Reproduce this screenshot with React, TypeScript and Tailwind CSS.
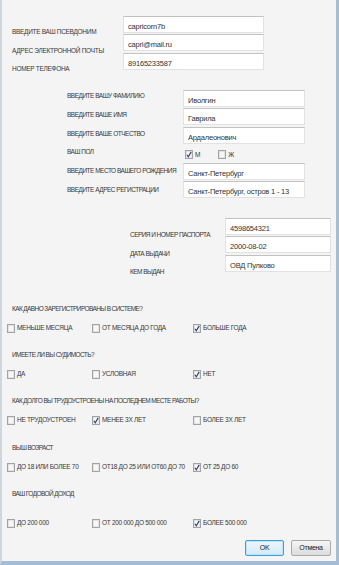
const font = "font-['Liberation_Sans',Arial,sans-serif]"

function Field({ value }: { value: string }) {
  return (
    <div className="h-[17px] mb-[1.3px] bg-white border border-[#e2e2e2] border-t-[#c2c2c2] pl-[4px] pt-[5px] text-[7.5px] leading-[9px] tracking-[-0.2px] text-[#333] whitespace-nowrap">
      {value}
    </div>
  )
}

function Check({ on }: { on?: boolean }) {
  return (
    <svg width="8" height="9" viewBox="0 0 8 9" className="shrink-0">
      <rect x="0.5" y="0.5" width="7" height="8" fill="#ececec" stroke="#a3a3a3" />
      <rect x="1.5" y="1.5" width="5" height="6" fill="#f7f7f7" stroke="#d6d6d6" strokeWidth="0.5" />
      {on && <path d="M1.9 4.7 L3.3 6.7 L6.2 1.9" fill="none" stroke="#233a73" strokeWidth="1.1" />}
    </svg>
  )
}

function Option({ label, on }: { label: string; on?: boolean }) {
  return (
    <div className="flex items-center gap-[2px] whitespace-nowrap">
      <Check on={on} />
      <span>{label}</span>
    </div>
  )
}

function Question({ title, opts, checked, className }: { title: string; opts: string[]; checked: number; className: string }) {
  return (
    <div className={className}>
      <div className="pl-[10px] h-[10px] leading-[10px] tracking-[-0.6px] whitespace-nowrap">{title}</div>
      <div className="grid grid-cols-[85px_101px_1fr] pl-[5px] h-[10px] leading-[10px] mt-[9px]">
        {opts.map((o, i) => (
          <Option key={o} label={o} on={i === checked} />
        ))}
      </div>
    </div>
  )
}

export default function App() {
  return (
    <div className={`${font} w-[339px] h-[565px] bg-[#f4f4f4] border-l-[2px] border-l-[#cfd6de] border-r-[3px] border-r-[#a8bdd4] border-b-[4px] border-b-[#a3bcd8] text-[6.5px] tracking-[-0.3px] text-[#383838] overflow-hidden pt-[16px]`}>
      {/* учётная запись */}
      <div className="flex h-[55px]">
        <div className="w-[121px] pl-[10px] pt-[7px] leading-[18.5px] whitespace-nowrap">
          <div>ВВЕДИТЕ ВАШ ПСЕВДОНИМ</div>
          <div>АДРЕС ЭЛЕКТРОННОЙ ПОЧТЫ</div>
          <div>НОМЕР ТЕЛЕФОНА</div>
        </div>
        <div className="w-[141px]">
          <Field value="capricorn7b" />
          <Field value="capri@mail.ru" />
          <Field value="89165233587" />
        </div>
      </div>

      {/* личные данные */}
      <div className="flex h-[109px] mt-[19px]">
        <div className="w-[181px] pl-[65px] -mt-[3px] leading-[18.8px] tracking-[-0.5px] whitespace-nowrap">
          <div>ВВЕДИТЕ ВАШУ ФАМИЛИЮ</div>
          <div>ВВЕДИТЕ ВАШЕ ИМЯ</div>
          <div>ВВЕДИТЕ ВАШЕ ОТЧЕСТВО</div>
          <div>ВАШ ПОЛ</div>
          <div>ВВЕДИТЕ МЕСТО ВАШЕГО РОЖДЕНИЯ</div>
          <div>ВВЕДИТЕ АДРЕС РЕГИСТРАЦИИ</div>
        </div>
        <div className="w-[122px]">
          <Field value="Иволгин" />
          <Field value="Гаврила" />
          <Field value="Ардалеонович" />
          <div className="h-[17px] mb-[1.3px] flex items-center pl-[2px] pt-[2px] gap-[18px]">
            <Option label="М" on />
            <Option label="Ж" />
          </div>
          <Field value="Санкт-Петербург" />
          <Field value="Санкт-Петербург, остров 1 - 13" />
        </div>
      </div>

      {/* паспорт */}
      <div className="flex h-[56px] mt-[19px]">
        <div className="w-[223px] pl-[128px] pt-[8px] leading-[18.5px] tracking-[-0.55px] whitespace-nowrap">
          <div>СЕРИЯ И НОМЕР ПАСПОРТА</div>
          <div>ДАТА ВЫДАЧИ</div>
          <div>КЕМ ВЫДАН</div>
        </div>
        <div className="w-[106px]">
          <Field value="4598654321" />
          <Field value="2000-08-02" />
          <Field value="ОВД Пулково" />
        </div>
      </div>

      <Question
        className="mt-[30px]"
        title="КАК ДАВНО ЗАРЕГИСТРИРОВАНЫ В СИСТЕМЕ?"
        opts={['МЕНЬШЕ МЕСЯЦА', 'ОТ МЕСЯЦА ДО ГОДА', 'БОЛЬШЕ ГОДА']}
        checked={2}
      />
      <Question
        className="mt-[17px]"
        title="ИМЕЕТЕ ЛИ ВЫ СУДИМОСТЬ?"
        opts={['ДА', 'УСЛОВНАЯ', 'НЕТ']}
        checked={2}
      />
      <Question
        className="mt-[17px]"
        title="КАК ДОЛГО ВЫ ТРУДОУСТРОЕНЫ НА ПОСЛЕДНЕМ МЕСТЕ РАБОТЫ?"
        opts={['НЕ ТРУДОУСТРОЕН', 'МЕНЕЕ 3Х ЛЕТ', 'БОЛЕЕ 3Х ЛЕТ']}
        checked={1}
      />
      <Question
        className="mt-[18px]"
        title="ВЫШ ВОЗРАСТ"
        opts={['ДО 18 ИЛИ БОЛЕЕ 70', 'ОТ18 ДО 25 ИЛИ ОТ60 ДО 70', 'ОТ 25 ДО 60']}
        checked={2}
      />
      <Question
        className="mt-[17px] [&>div:nth-child(2)]:mt-[19px]"
        title="ВАШ ГОДОВОЙ ДОХОД"
        opts={['ДО 200 000', 'ОТ 200 000 ДО 500 000', 'БОЛЕЕ 500 000']}
        checked={2}
      />

      <div className="flex justify-end gap-[7px] pr-[5px] mt-[12px]">
        <button className="w-[39px] h-[16px] rounded-[2px] border border-[#3c9fd8] bg-gradient-to-b from-[#eef7fd] to-[#d3e9f7] shadow-[inset_0_0_0_1px_#bfe3f8] text-[7px] text-[#1c1c1c]">
          OK
        </button>
        <button className="w-[40px] h-[16px] rounded-[2px] border border-[#a9a9a9] bg-gradient-to-b from-[#f6f6f6] to-[#dcdcdc] text-[7px] text-[#1c1c1c]">
          Отмена
        </button>
      </div>
    </div>
  )
}
